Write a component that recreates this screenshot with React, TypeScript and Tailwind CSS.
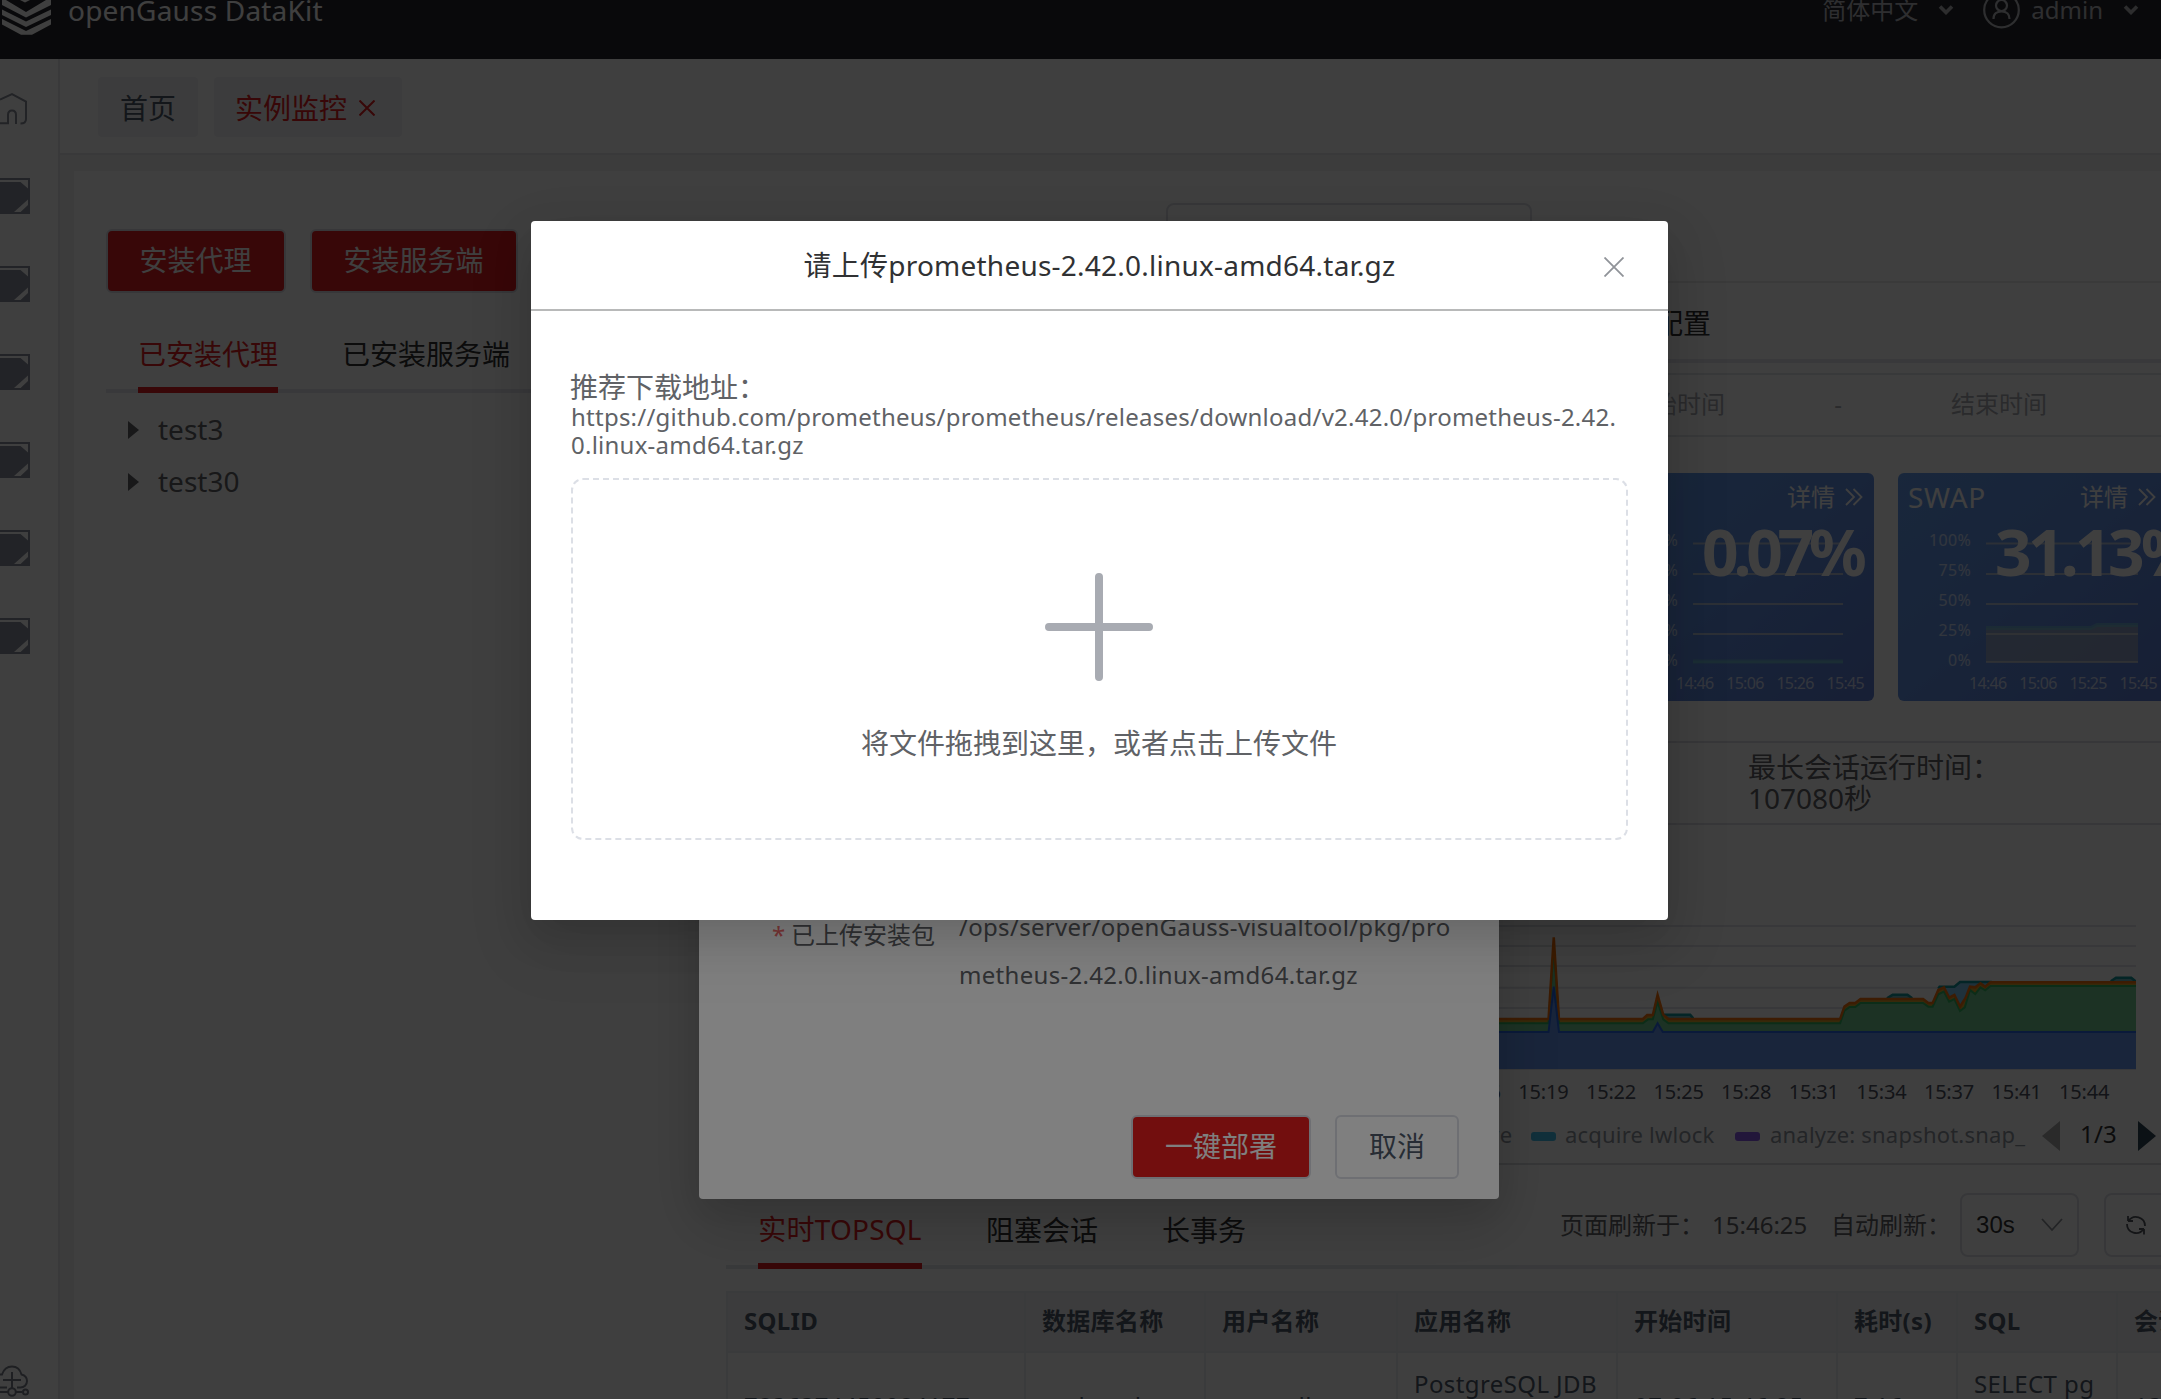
import type { ReactNode } from "react";

const sideItems = [0, 1, 2, 3, 4, 5];

function Chevron() {
  return (
    <svg width="16" height="10" viewBox="0 0 16 10" fill="none" stroke="#b4b6ba" strokeWidth="3.600">
      <path d="M2 1.500 8 7.500 14 1.500" />
    </svg>
  );
}

function Logo() {
  return (
    <svg width="50" height="36" viewBox="2 0 50 36" fill="#ffffff" className="shrink-0">
      <path d="M20 0H30L25 2.500Z" />
      <path d="M2 0H6L26 12 46 0H51V5L26 17.500 2 5Z" />
      <path d="M2 9.500 26 21.500 51 9.500V15L26 27 2 15Z" />
      <path d="M2 19 26 31 51 19V24.500L32 34.800H21L2 24.500Z" />
    </svg>
  );
}

function Header() {
  return (
    <header className="flex h-[59px] shrink-0 justify-between bg-[#26262c]">
      <div className="flex pl-[2px]">
        <Logo />
        <span className="ml-[16px] mt-[-4px] h-[28px] whitespace-nowrap text-[28px] tracking-[0.2px] text-white">openGauss DataKit</span>
      </div>
      <div className="flex h-[20px] items-center pr-[22px] text-[24px] text-[#b8bbc0]">
        <span>简体中文</span>
        <span className="ml-[20px]"><Chevron /></span>
        <svg className="ml-[29px] shrink-0" width="37" height="38" viewBox="0 0 37 38" fill="none" stroke="currentColor" strokeWidth="2.200">
          <circle cx="18.500" cy="19" r="17.300" />
          <circle cx="18.500" cy="14.500" r="5.500" />
          <path d="M10.500 28C10.500 22.500 14 20.500 18.500 20.500S26.500 22.500 26.500 28" />
        </svg>
        <span className="ml-[11px]">admin</span>
        <span className="ml-[20px]"><Chevron /></span>
      </div>
    </header>
  );
}

function Sidebar() {
  return (
    <aside className="flex w-[60px] shrink-0 flex-col border-r-2 border-[#e4e6ea] pt-[31px]">
      <svg width="30" height="36" viewBox="0 90 30 36" fill="none" stroke="#888c98" strokeWidth="2">
        <path d="M0 99.500 12 94 26 101.500V119Q26 123.500 20.500 123.500M16 124V115Q16 110.500 12 110.500T8 115V123.200H0" />
      </svg>
      {sideItems.map((i) => (
        <svg key={i} className="mt-[52px]" width="30" height="36" viewBox="0 0 30 36">
          <path d="M0 0H30V36H0Z" fill="#888c9c" />
          <path d="M0 2H28V10.500L20.500 4H0Z" fill="#ffffff" />
          <path d="M14 34 28 21.500V27L20.600 34Z" fill="#ffffff" />
        </svg>
      ))}
      <svg className="mb-[1px] mt-auto" width="30" height="34" viewBox="0 1364 30 34" fill="none" stroke="#787c88" strokeWidth="2">
        <path d="M0 1374.500H2C4 1368.500 8 1366.500 12 1366.500S20 1369 21.500 1374.500C25.500 1375.500 27 1378 27 1381C27 1385 24 1387.500 20.500 1387.500H17M7 1387.500H0M12 1372V1388M3 1380H21M0 1392H8M16 1392H22" />
        <circle cx="12" cy="1392" r="3.800" />
        <circle cx="25.500" cy="1392" r="2.500" />
      </svg>
    </aside>
  );
}

function TreeColumn() {
  return (
    <section className="ml-[32px] w-[588px] shrink-0">
      <div className="mt-[58px] flex gap-[24px] text-[28px] text-white">
        <div className="flex h-[64px] w-[180px] items-center justify-center rounded-[6px] border-2 border-[#dcdfe6] bg-[#e01c20] pb-[2px] pr-[1px]">安装代理</div>
        <div className="flex h-[64px] w-[208px] items-center justify-center rounded-[6px] border-2 border-[#dcdfe6] bg-[#e01c20] pb-[2px] pr-[1px]">安装服务端</div>
      </div>
      <div className="mt-[22px] flex h-[78px] border-b-4 border-[#e4e7ed] pl-[32px] text-[28px] text-[#303133]">
        <div className="mr-[64px] flex h-[78px] w-[140px] items-center justify-center border-b-[6px] border-[#e01c20] pb-[2px] pt-[8px] text-[#e01c20]">已安装代理</div>
        <div className="flex h-[78px] items-center">已安装服务端</div>
      </div>
      <div className="mt-[11px] text-[28px] text-[#606266]">
        {["test3", "test30"].map((t) => (
          <div key={t} className="flex h-[52px] items-center pl-[22px]">
            <svg className="shrink-0" width="11" height="18" viewBox="0 0 11 18" fill="#606266"><path d="M0 0 11 9 0 18Z" /></svg>
            <span className="ml-[19px] pb-[3px]">{t}</span>
          </div>
        ))}
      </div>
    </section>
  );
}

const cards = [
  { title: "IO", value: "0.07%", track: "tracking-[-5.200px]", times: ["14:46", "15:06", "15:26", "15:45"], area: "M0 120.500H150", fill: false },
  { title: "SWAP", value: "31.13%", track: "tracking-[-3.700px]", times: ["14:46", "15:06", "15:25", "15:45"], area: "M0 87H105L111 84H152", fill: true },
];

function MetricCards() {
  return (
    <div className="ml-[879px] mt-[36px] flex gap-[24px]">
      {cards.map((c) => (
        <div key={c.title} className="relative h-[228px] w-[269px] rounded-[6px] bg-linear-to-br from-[#649cee] via-[#6190e4] to-[#5c7cd4] text-white">
          <div className="flex h-[48px] items-center pl-[10px]">
            <span className="w-[172px] text-[28px] tracking-[0.7px]">{c.title}</span>
            <span className="text-[24px]">详情</span>
            <svg className="ml-[10px]" width="18" height="18" viewBox="0 0 18 18" fill="none" stroke="currentColor" strokeWidth="1.800">
              <path d="M1 1 9 9 1 17M8.500 1 16.500 9 8.500 17" />
            </svg>
          </div>
          <div className="flex">
            <div className="mt-[4px] w-[73px] text-right text-[16px] leading-[30px] tracking-[0.3px] text-white/65">
              {["100%", "75%", "50%", "25%", "0%"].map((l) => <div key={l}>{l}</div>)}
            </div>
            <svg className="ml-[15px] mt-[20px]" width="154" height="124" viewBox="0 0 154 124" fill="none">
              {c.fill && <path d="M0 87H105L111 84H152V121H0Z" fill="#acb0b8" fillOpacity="0.600" />}
              <path d={c.area} stroke="#70b8d0" strokeOpacity="0.700" strokeWidth="4" />
              {[2.5, 33, 63, 93, 121].map((y) => (
                <path key={y} d={`M0 ${y}H${c.fill ? 152 : 150}`} stroke={y === 121 && !c.fill ? "#70b8d0" : "#cfd0d4"} strokeOpacity="0.750" strokeWidth="2" />
              ))}
            </svg>
          </div>
          <div className="ml-[71px] mt-[-6px] flex w-[188px] justify-between text-[16px] leading-[28px] tracking-[-0.700px] text-white/70">
            {c.times.map((t) => <span key={t}>{t}</span>)}
          </div>
          <div className={`absolute left-[97px] top-[39px] text-[64px] font-bold leading-[80px] ${c.track}`}>{c.value}</div>
        </div>
      ))}
    </div>
  );
}

const top = "44,957 158,957 170,712 182,957 375,957 385,945 398,945 409,885 422,944 434,957 829,957 839,920 851,909 864,909 876,897 1020,897 1032,909 1042,909 1055,870 1068,862 1080,893 1092,885 1105,920 1118,893 1128,860 1140,862 1152,850 1163,860 1175,847 1510,847";
const mid = "44,970 158,970 170,735 182,970 375,970 387,958 398,958 409,905 422,958 434,970 829,970 839,932 851,921 864,921 876,909 1020,909 1032,920 1042,920 1055,883 1068,875 1080,905 1092,897 1105,933 1116,922 1128,870 1140,882 1152,862 1163,871 1175,858 1510,858";
const low = "44,996 158,996 170,860 182,996 398,996 409,970 421,996 1510,996";

function SessionChart() {
  const s = { vectorEffect: "non-scaling-stroke" as const };
  return (
    <svg className="ml-[773px]" width="637" height="150" viewBox="44 660 1466 450" preserveAspectRatio="none" fill="none">
      {[678, 738, 798, 863, 924, 984, 1044, 1108].map((y) => (
        <path key={y} d={`M44 ${y}H1510`} stroke="#e0e2e8" strokeWidth="2" {...s} />
      ))}
      <path d="M422 957V944H484L491 955V960ZM937 896 950 884H984L995 896ZM1452 848 1464 833H1499L1510 846V850Z" fill="#6cb4bc" />
      <path d="M1050 890 1057 860H1092L1105 846H1175V860L1118 920H1105L1080 893Z" fill="#7cc4ec" />
      <path d="M422 944H484L491 955M937 895 950 884H984L995 895M1055 866 1058 860H1092L1105 846H1178M1452 844 1464 833H1499L1510 845" stroke="#109498" strokeWidth="2.500" {...s} />
      <path d={`M${top} L1510,1107 44,1107Z`} fill="#dca428" />
      <path d={`M${mid} L1510,1107 44,1107Z`} fill="#70c890" />
      <polyline points={mid} stroke="#30b460" strokeWidth="2" {...s} />
      <polyline points={top} stroke="#f4700c" strokeWidth="2.500" {...s} />
      <path d={`M${low} L1510,1107 44,1107Z`} fill="#6494ec" />
      <polyline points={low} stroke="#2868e8" strokeWidth="2" {...s} />
    </svg>
  );
}

function ChartFooter() {
  return (
    <>
      <div className="ml-[716px] mt-[8px] flex h-[28px] items-center text-[20px] tracking-[-0.200px] text-[#4e5260]">
        {["15:16", "15:19", "15:22", "15:25", "15:28", "15:31", "15:34", "15:37", "15:41", "15:44"].map((t) => (
          <span key={t} className="w-[67.6px] shrink-0 text-center">{t}</span>
        ))}
      </div>
      <div className="mt-[14px] flex h-[32px] items-center whitespace-nowrap pl-[725px] text-[22px] tracking-[0.200px] text-[#8f949e]">
        <span className="w-[60px] pb-[5px] text-right">active</span>
        <span className="ml-[20px] h-[9px] w-[25px] rounded-[3px] bg-[#44c0ec]" />
        <span className="ml-[9px] w-[150px] pb-[5px]">acquire lwlock</span>
        <span className="ml-[20px] h-[9px] w-[25px] rounded-[3px] bg-[#8858e8]" />
        <span className="ml-[10px] w-[252px] pb-[5px]">analyze: snapshot.snap_</span>
        <svg className="ml-[20px]" width="18" height="30" viewBox="0 0 18 30" fill="#a8a8a8"><path d="M18 0V30L0 15Z" /></svg>
        <span className="ml-[20px] w-[38px] pb-[5px] text-[24px] text-[#303133]">1/3</span>
        <svg className="ml-[20px]" width="18" height="30" viewBox="0 0 18 30" fill="#2f4554"><path d="M0 0V30L18 15Z" /></svg>
      </div>
    </>
  );
}

const columns: { w: string; head: string; cell: ReactNode }[] = [
  { w: "w-[298px]", head: "SQLID", cell: "7836374450084177" },
  { w: "w-[180px]", head: "数据库名称", cell: "sysbench" },
  { w: "w-[192px]", head: "用户名称", cell: "gaussdb" },
  { w: "w-[220px]", head: "应用名称", cell: <>PostgreSQL JDB<br />C Driver</> },
  { w: "w-[220px]", head: "开始时间", cell: "07-06 15:46:25" },
  { w: "w-[120px]", head: "耗时(s)", cell: "7.16" },
  { w: "w-[160px]", head: "SQL", cell: <>SELECT pg<br />_sleep</> },
  { w: "w-[180px]", head: "会话ID", cell: "1381" },
];

function SqlTable() {
  return (
    <div className="mt-[22px] text-[24px] text-[#4e5969]">
      <div className="flex h-[62px] border-y-2 border-[#ebedf2] bg-[#f3f3f4]">
        {columns.map((c) => (
          <div key={c.head} className={`${c.w} flex shrink-0 items-center border-l-2 border-[#ebedf2] pb-[3px] pl-[16px] font-bold tracking-[0.300px]`}>{c.head}</div>
        ))}
      </div>
      <div className="flex h-[106px]">
        {columns.map((c) => (
          <div key={c.head} className={`${c.w} flex shrink-0 items-center border-l-2 border-[#ebedf2] pb-px pl-[16px] leading-[44px] tracking-[0.400px]`}><span>{c.cell}</span></div>
        ))}
      </div>
    </div>
  );
}

function SqlTabs() {
  return (
    <div className="flex h-[104px] border-b-4 border-[#e4e7ed] text-[28px] text-[#303133]">
      <div className="ml-[32px] flex h-[104px] w-[164px] items-end justify-center whitespace-nowrap border-b-[6px] border-[#e01c20] pb-[20px] tracking-[0.200px] text-[#e01c20]">实时TOPSQL</div>
      <div className="ml-[64px] flex items-end pb-[21px]">阻塞会话</div>
      <div className="ml-[64px] flex items-end pb-[21px]">长事务</div>
      <div className="ml-[314px] mt-[28px] flex h-[64px] items-center text-[24px] text-[#606266]">
        <span className="w-[152px]">页面刷新于：</span>
        <span className="w-[119px]">15:46:25</span>
        <span className="w-[129px]">自动刷新：</span>
        <div className="flex h-[64px] w-[119px] items-center justify-between rounded-[8px] border-2 border-[#dcdfe6] pl-[14px] pr-[14px] font-['Liberation_Sans'] text-[#303133]">
          30s
          <svg width="22" height="14" viewBox="0 0 22 14" fill="none" stroke="#8c9098" strokeWidth="1.800"><path d="M1 1 11 12 21 1" /></svg>
        </div>
        <div className="ml-[25px] flex h-[64px] w-[64px] items-center justify-center rounded-[8px] border-2 border-[#dcdfe6]">
          <svg width="24" height="24" viewBox="0 0 24 24" fill="none" stroke="#50545c" strokeWidth="1.800">
            <path d="M4 8V3M4 8H9M4.500 8A9 9 0 0 1 21 13M20 16V21.500M20 16H15M19.500 16A9 9 0 0 1 3 11" />
          </svg>
        </div>
      </div>
    </div>
  );
}

function Dashboard() {
  return (
    <section className="ml-[32px] w-[1500px] shrink-0">
      <div className="flex h-[110px] pt-[32px]">
        <div className="ml-[440px] h-[64px] w-[366px] rounded-[8px] border-2 border-[#dcdfe6]" />
      </div>
      <div className="flex h-[82px] items-center border-b-4 border-t-2 border-b-[#e4e7ed] border-t-[#e8e8e8] pb-[2px] text-[28px] text-[#303133]">
        <span className="w-[985px] pt-[6px] text-right">实例配置</span>
      </div>
      <div className="ml-[744px] mt-[10px] flex h-[64px] items-center border-2 border-[#e2e4e8] pb-[2px] pl-[157px] text-[24px] text-[#a8abb2]">
        <span className="w-[96px]">开始时间</span>
        <span className="w-[226px] text-center">-</span>
        <span>结束时间</span>
      </div>
      <MetricCards />
      <div className="mt-[40px] h-[84px] border-y-2 border-[#dcdfe6] pl-[1022px] pt-[9px] text-[28px] leading-[31px] text-[#606266]">
        最长会话运行时间：<br />107080秒
      </div>
      <div className="h-[95px]" />
      <SessionChart />
      <ChartFooter />
      <div className="mt-[11px] h-[2px] bg-[#d8dade]" />
      <SqlTabs />
      <SqlTable />
    </section>
  );
}

function DeployDialog() {
  return (
    <div className="absolute left-[699px] top-[380px] flex h-[819px] w-[800px] flex-col justify-between rounded-[4px] bg-white pb-[20px] shadow-[0_24px_64px_8px_rgba(0,0,0,0.08),0_16px_40px_rgba(0,0,0,0.12)]">
      <div className="flex pl-[73px] pt-[523px] text-[24px] text-[#606266]">
        <span className="w-[19px] pt-[16px] leading-[32px] text-[#f56c6c]">*</span>
        <span className="w-[168px] pt-[16px] leading-[32px]">已上传安装包</span>
        <span className="w-[499px] break-all leading-[48px] tracking-[0.300px]">/ops/server/openGauss-visualtool/pkg/prometheus-2.42.0.linux-amd64.tar.gz</span>
      </div>
      <div className="flex justify-end gap-[24px] pr-[40px] text-[28px]">
        <div className="flex h-[64px] w-[180px] items-center justify-center rounded-[6px] border-2 border-[#dcdfe6] bg-[#e41c1c] pb-[2px] text-white">一键部署</div>
        <div className="flex h-[64px] w-[124px] items-center justify-center rounded-[6px] border-2 border-[#dcdfe6] pb-[2px] text-[#4e5969]">取消</div>
      </div>
    </div>
  );
}

function UploadDialog() {
  return (
    <div className="absolute left-[531px] top-[221px] h-[699px] w-[1137px] rounded-[4px] bg-white shadow-[0_24px_64px_8px_rgba(0,0,0,0.08),0_16px_40px_rgba(0,0,0,0.12)]">
      <div className="flex h-[90px] items-center justify-between border-b-2 border-[#b8b9b9] pl-[64px] pr-[44px] text-[28px] text-[#303133]">
        <span className="flex-1 text-center tracking-[0.230px]">请上传prometheus-2.42.0.linux-amd64.tar.gz</span>
        <svg className="mt-[3px]" width="20" height="20" viewBox="0 0 20 20" fill="none" stroke="#909399" strokeWidth="1.800"><path d="M0.500 0.500 19.500 19.500M19.500 0.500 0.500 19.500" /></svg>
      </div>
      <div className="px-[40px] pt-[61px] text-[#606266]">
        <p className="ml-[-1px] text-[28px] leading-[31px]">推荐下载地址：</p>
        <p className="h-[75px] w-[1056px] break-all text-[24px] leading-[28px] tracking-[0.240px]">https://github.com/prometheus/prometheus/releases/download/v2.42.0/prometheus-2.42.0.linux-amd64.tar.gz</p>
        <div className="flex h-[362px] flex-col items-center rounded-[12px] border-2 border-dashed border-[#dcdfe6] pr-[1px] pt-[93px]">
          <svg width="108" height="108" viewBox="0 0 108 108" stroke="#a8abb2" strokeWidth="8" strokeLinecap="round"><path d="M54 4V104M4 54H104" /></svg>
          <span className="mt-[46px] text-[28px] leading-[32px]">将文件拖拽到这里，或者点击上传文件</span>
        </div>
      </div>
    </div>
  );
}

export default function App() {
  return (
    <div className="relative flex h-[1399px] w-[2161px] flex-col overflow-hidden bg-white font-['Noto_Sans','Noto_Sans_CJK_SC',sans-serif] leading-none">
      <Header />
      <div className="flex min-h-0 flex-1">
        <Sidebar />
        <main className="flex min-w-0 flex-1 flex-col overflow-hidden bg-[#f0f0f1]">
          <nav className="flex h-[96px] shrink-0 gap-[16px] border-b-2 border-[#e4e6ea] bg-white pl-[38px] pt-[18px] text-[28px] text-[#4e5969]">
            <div className="flex h-[60px] w-[100px] items-center justify-center rounded-[4px] bg-[#f3f3f4] pt-[2px]">首页</div>
            <div className="flex h-[60px] w-[188px] items-center rounded-[4px] bg-[#f3f3f4] pl-[21px] pt-[2px] text-[#e01c20]">
              实例监控
              <svg className="ml-[12px]" width="16" height="16" viewBox="0 0 16 16" fill="none" stroke="currentColor" strokeWidth="2"><path d="M0.500 0.500 15.500 15.500M15.500 0.500 0.500 15.500" /></svg>
            </div>
          </nav>
          <div className="ml-[14px] mt-[16px] flex h-[1300px] shrink-0 bg-white">
            <TreeColumn />
            <Dashboard />
          </div>
        </main>
      </div>
      <div className="absolute inset-0 bg-black/50" />
      <DeployDialog />
      <div className="absolute inset-0 bg-black/50" />
      <UploadDialog />
    </div>
  );
}
